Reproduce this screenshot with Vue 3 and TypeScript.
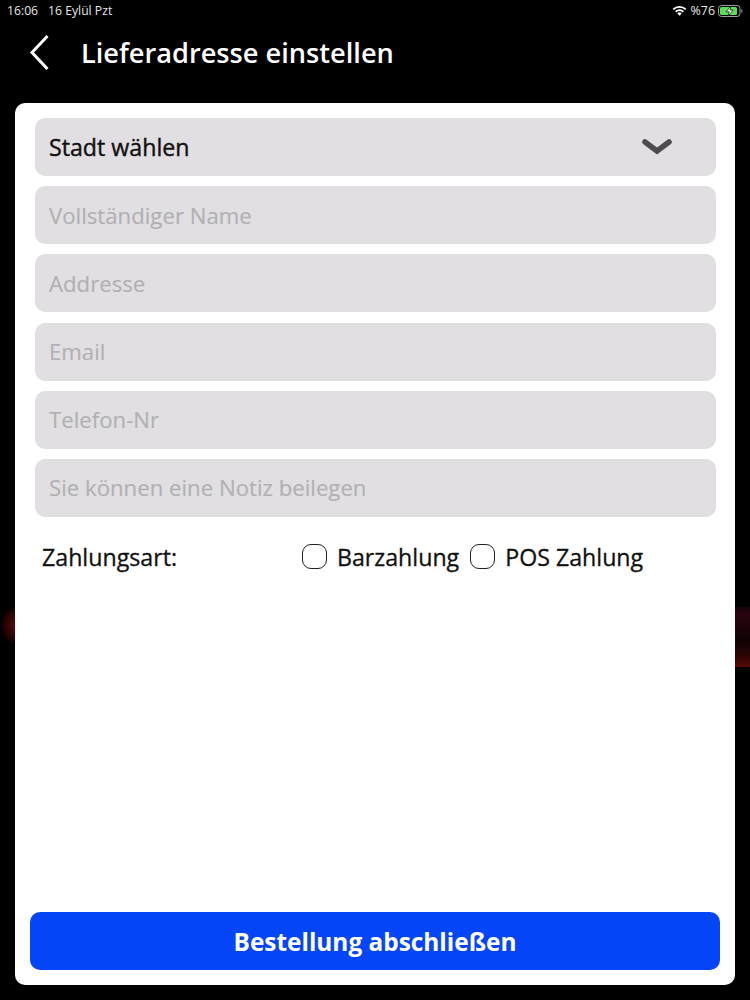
<script setup lang="ts">
const fields: string[] = [
  'Vollständiger Name',
  'Addresse',
  'Email',
  'Telefon-Nr',
  'Sie können eine Notiz beilegen',
]
const payments: string[] = ['Barzahlung', 'POS Zahlung']
</script>

<template>
  <div class="page">
    <div class="glow glow-left"></div>
    <div class="glow glow-right"></div>

    <div class="status">
      <div class="status-left">
        <span>16:06</span>
        <span>16 Eylül Pzt</span>
      </div>
      <div class="status-right">
        <svg class="wifi" width="15" height="11" viewBox="0 0 15 11" aria-hidden="true">
          <path d="M0.6 3.7A10 10 0 0 1 14.4 3.7L13.1 5A8.2 8.2 0 0 0 1.9 5Z" fill="#fff" />
          <path d="M3 6.1A6.6 6.6 0 0 1 12 6.1L10.7 7.4A4.8 4.8 0 0 0 4.3 7.4Z" fill="#fff" />
          <path d="M5.3 8.4A3.2 3.2 0 0 1 9.7 8.4L7.5 10.7Z" fill="#fff" />
        </svg>
        <span class="percent">%76</span>
        <svg class="battery" width="25" height="12" viewBox="0 0 25 12" aria-hidden="true">
          <rect x="0.5" y="0.5" width="21.5" height="11" rx="3" fill="none" stroke="#a0a0a0" />
          <rect x="2" y="2" width="17" height="8" rx="1.5" fill="#58e058" />
          <path d="M23.2 4v4a2 2 0 0 0 1.4-2A2 2 0 0 0 23.2 4Z" fill="#8a8a8a" />
          <path d="M13 0.8 8 6.8h3.2l-1.2 4.4 5.2-6.2h-3.2Z" fill="#fff" stroke="#1a1a1a" stroke-width="0.8" />
        </svg>
      </div>
    </div>

    <header class="header">
      <svg class="back" width="22" height="38" viewBox="0 0 22 38" aria-hidden="true">
        <path d="M18.5 2 3 18.5 18.5 35" fill="none" stroke="#fff" stroke-width="3" />
      </svg>
      <h1 class="title">Lieferadresse einstellen</h1>
    </header>

    <main class="card">
      <div class="form">
        <div class="field select">
          <span>Stadt wählen</span>
          <svg class="chevron" width="30" height="18" viewBox="0 0 30 18" aria-hidden="true">
            <path d="M3 4 15 13 27 4" fill="none" stroke="#4d4b4e" stroke-width="5.5" stroke-linecap="round" />
          </svg>
        </div>
        <div v-for="label in fields" :key="label" class="field placeholder">{{ label }}</div>
      </div>

      <div class="payment">
        <span class="payment-label">Zahlungsart:</span>
        <div class="options">
          <label v-for="option in payments" :key="option" class="option">
            <span class="box"></span>
            <span>{{ option }}</span>
          </label>
        </div>
      </div>

      <button class="submit" type="button">Bestellung abschließen</button>
    </main>
  </div>
</template>

<style scoped>
.page {
  position: relative;
  width: 750px;
  height: 1000px;
  box-sizing: border-box;
  overflow: hidden;
  background: #000;
  font-family: "Open Sans", "Liberation Sans", sans-serif;
  display: flex;
  flex-direction: column;
  padding-bottom: 15px;
}
.glow {
  position: absolute;
}
.glow-left {
  left: 0;
  top: 600px;
  width: 15px;
  height: 44px;
  background: radial-gradient(ellipse 15px 20px at 100% 58%, #5c0b0b, #2a0405 60%, rgba(0, 0, 0, 0) 100%);
}
.glow-right {
  right: 0;
  top: 607px;
  width: 15px;
  height: 60px;
  background: linear-gradient(to bottom, #14020a 0%, #2a0410 12%, #1c0308 35%, #100204 55%, #2a0404 80%, #560a04 100%);
}
.status {
  height: 21px;
  padding: 0 7px;
  display: flex;
  justify-content: space-between;
  align-items: center;
  color: #e4e4e4;
  font-size: 12.2px;
  position: relative;
}
.status-left {
  display: flex;
  gap: 10px;
}
.status-right {
  display: flex;
  align-items: center;
  gap: 4px;
}
.percent {
  font-size: 12.4px;
}
.battery {
  margin-left: -1px;
}
.header {
  height: 64px;
  margin-bottom: 18px;
  padding: 0 0 0 29px;
  box-sizing: border-box;
  display: flex;
  align-items: center;
  position: relative;
}
.back {
  margin-right: 30px;
}
.title {
  margin: 0;
  color: #fff;
  font-size: 27.2px;
  font-weight: 600;
  line-height: 1;
}
.card {
  position: relative;
  flex: 1;
  margin: 0 15px;
  padding: 15px;
  background: #fff;
  border-radius: 10px;
  display: flex;
  flex-direction: column;
}
.form {
  display: flex;
  flex-direction: column;
  gap: 10.2px;
  margin: 0 4px 0 5px;
  width: 681px;
}
.field {
  height: 58px;
  box-sizing: border-box;
  padding: 0 44px 0 14px;
  border-radius: 10px;
  background: #e1dfe2;
  display: flex;
  align-items: center;
  font-size: 22.2px;
}
.select {
  justify-content: space-between;
  color: #111;
  font-size: 23.2px;
  -webkit-text-stroke: 0.4px #111;
}
.placeholder {
  color: #b2b0b3;
  -webkit-text-stroke: 0.15px #b2b0b3;
}
.chevron {
  flex: none;
}
.payment {
  display: flex;
  align-items: center;
  margin: 24px 0 0 12px;
  font-size: 23.2px;
  color: #111;
  -webkit-text-stroke: 0.3px #111;
}
.payment-label {
  width: 260px;
}
.options {
  display: flex;
  gap: 11px;
}
.option {
  display: flex;
  align-items: center;
  gap: 10px;
}
.box {
  width: 25px;
  height: 25px;
  box-sizing: border-box;
  border: 1px solid #222;
  border-radius: 9px;
}
.submit {
  margin-top: auto;
  height: 58px;
  border: 0;
  border-radius: 10px;
  background: #0545f8;
  color: #fff;
  font-family: inherit;
  font-size: 24.4px;
  font-weight: 700;
}
</style>
